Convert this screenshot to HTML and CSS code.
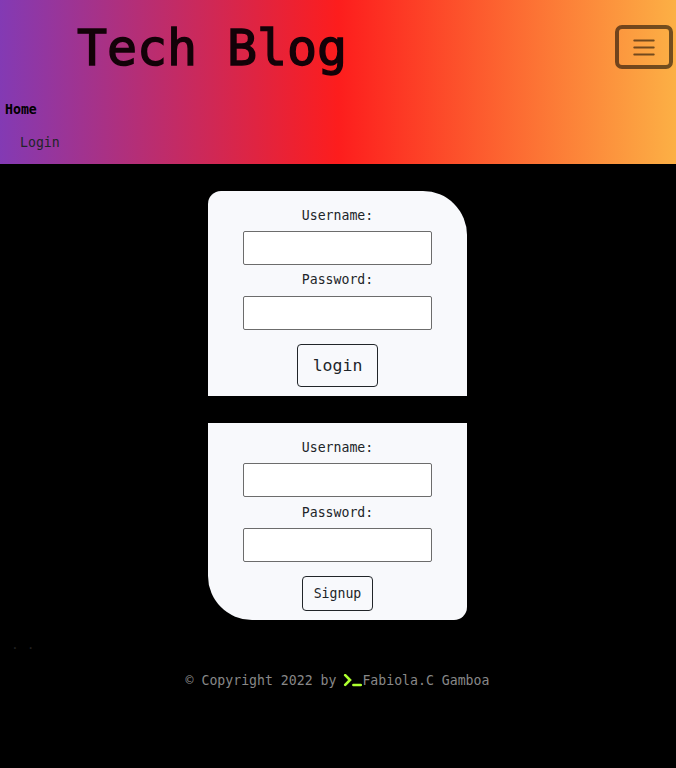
FILE: index.html
```html
<!DOCTYPE html>
<html lang="en">
<head>
<meta charset="utf-8">
<title>Tech Blog</title>
<link rel="stylesheet" href="styles.css">
</head>
<body>
<header class="navbar">
  <div class="top">
    <h1 class="brand">Tech Blog</h1>
    <button class="toggler" aria-label="Toggle navigation">
      <svg width="26" height="26" viewBox="0 0 26 26"><path d="M3.2 6.5h19.6M3.2 13.5h19.6M3.2 20.5h19.6" fill="none" stroke="currentColor" stroke-width="1.8" stroke-linecap="round"/></svg>
    </button>
  </div>
  <nav class="links">
    <a class="home">Home</a>
    <a class="login-link">Login</a>
  </nav>
</header>
<main>
  <form class="card card-login">
    <label for="lu">Username:</label>
    <input id="lu" type="text">
    <label for="lp">Password:</label>
    <input id="lp" type="password">
    <button type="button" class="btn btn-large">login</button>
  </form>
  <form class="card card-signup">
    <label for="su">Username:</label>
    <input id="su" type="text">
    <label for="sp">Password:</label>
    <input id="sp" type="password">
    <button type="button" class="btn">Signup</button>
  </form>
</main>
<footer>
  <div class="dots">. .</div>
  <p class="copy"><span>© Copyright 2022 by </span><svg class="prompt" width="19" height="14" viewBox="0 0 19 14"><path d="M2.2 1.2L7 6L2.2 10.8M10.4 11H17.8" fill="none" stroke="currentColor" stroke-width="2.6" stroke-linecap="round"/></svg><span>Fabiola.C Gamboa</span></p>
</footer>
</body>
</html>
```
FILE: styles.css
```css
* { box-sizing: border-box; }
body {
  margin: 0;
  min-height: 768px;
  background: #000;
  color: #212529;
  font: 13.2px/20px "DejaVu Sans Mono", "Liberation Mono", monospace;
}
.navbar {
  height: 164px;
  background: linear-gradient(90deg, rgb(131, 58, 180) 0%, rgb(253, 29, 29) 50%, rgb(252, 176, 69) 100%);
}
.top {
  height: 94px;
  display: flex;
  justify-content: space-between;
  align-items: center;
  padding: 0 3px 0 77px;
}
.brand {
  margin: 0;
  padding-top: 2px;
  font: 400 50px/60px "DejaVu Sans Mono", monospace;
  letter-spacing: -0.1px;
  color: #130208;
  -webkit-text-stroke: 1.4px #130208;
}
.toggler {
  display: flex;
  align-items: center;
  justify-content: center;
  width: 58px;
  height: 44px;
  padding: 0;
  background: none;
  border: 4px solid rgba(0, 0, 0, 0.55);
  border-radius: 7px;
  color: rgba(0, 0, 0, 0.55);
}
.links {
  display: flex;
  flex-direction: column;
  padding: 6px 0 0 5px;
}
.home { font-weight: 700; color: #000; }
.login-link { margin: 13px 0 0 15px; }
main {
  display: flex;
  flex-direction: column;
  align-items: center;
  gap: 27px;
  padding: 27px 1px 0 0;
}
.card {
  display: flex;
  flex-direction: column;
  align-items: center;
  width: 259px;
  padding-top: 15px;
  background: #f8f9fc;
}
.card-login { height: 205px; border-radius: 13px 44px 0 0; }
.card-signup { height: 197px; border-radius: 0 0 13px 44px; }
.card input {
  width: 189px;
  height: 34px;
  margin: 5px 0;
  border: 1px solid #6c6c6c;
  border-radius: 2px;
  background: #fff;
}
.card input + label { margin-top: 0.5px; }
.card-login input + label { position: relative; top: -1px; }
.btn {
  width: 71px;
  height: 35px;
  margin-top: 9px;
  padding: 2px 0 0;
  border: 1px solid #212529;
  border-radius: 4px;
  background: none;
  font: inherit;
  color: #212529;
}
.btn-large {
  width: 81px;
  height: 43px;
  font-size: 16.5px;
}
.dots {
  height: 20px;
  margin: 15px 0 0 11px;
  color: #222;
  font-size: 13px;
}
.copy {
  display: flex;
  justify-content: center;
  align-items: center;
  margin: 16px 1px 0 0;
  color: #888;
  white-space: pre;
}
.prompt { margin-left: -1px; color: #adff2f; }
```
